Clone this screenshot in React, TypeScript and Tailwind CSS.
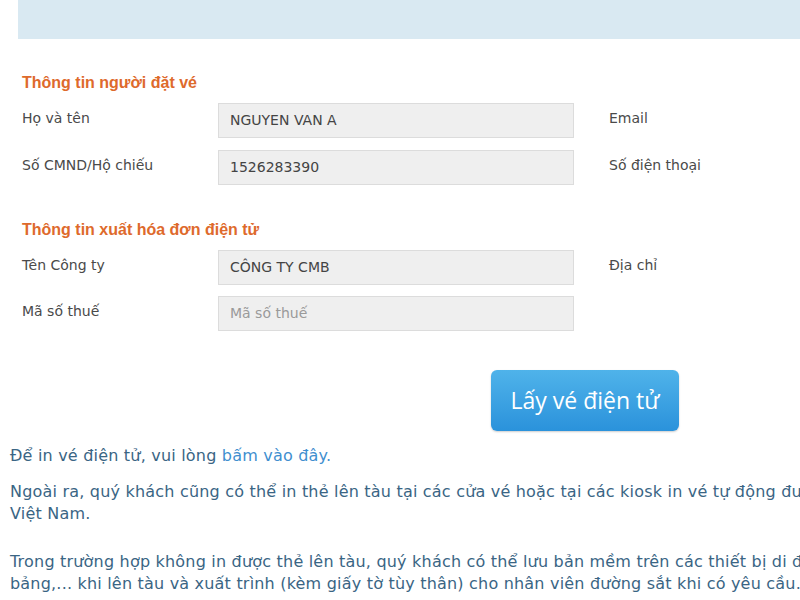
import React from "react";

const labelCls = "text-[14px] text-[#4a4a4a] leading-none";
const font = { fontFamily: '"DejaVu Sans", Verdana, sans-serif' };
const headFont = { fontFamily: '"Liberation Sans", Arial, sans-serif' };

function Field({ value, placeholder }: { value?: string; placeholder?: string }) {
  return (
    <div className="w-[356px] h-[35px] bg-[#efefef] border border-[#dcdcdc] flex items-center pl-[11px] text-[14px]">
      {value ? (
        <span className="text-[#444]">{value}</span>
      ) : (
        <span className="text-[#9a9a9a]">{placeholder}</span>
      )}
    </div>
  );
}

function Row({ label, value, placeholder, right }: { label: string; value?: string; placeholder?: string; right?: string }) {
  return (
    <div className="flex items-center h-[35px]">
      <div className={`w-[196px] ${labelCls} -mt-[6px]`}>{label}</div>
      <Field value={value} placeholder={placeholder} />
      <div className={`ml-[35px] ${labelCls} -mt-[6px]`}>{right}</div>
    </div>
  );
}

export default function App() {
  return (
    <div className="w-[800px] h-[600px] overflow-hidden bg-white" style={font}>
      <div className="ml-[18px] h-[39px] bg-[#d9e9f2]" />
      <div className="pl-[22px] pt-[36px]">
        <div className="text-[16px] font-bold text-[#de6a2c] leading-none" style={headFont}>
          Thông tin người đặt vé
        </div>
        <div className="mt-[12px] flex flex-col gap-[12px]">
          <Row label="Họ và tên" value="NGUYEN VAN A" right="Email" />
          <Row label="Số CMND/Hộ chiếu" value="1526283390" right="Số điện thoại" />
        </div>
        <div className="mt-[37px] text-[16px] font-bold text-[#de6a2c] leading-none" style={headFont}>
          Thông tin xuất hóa đơn điện tử
        </div>
        <div className="mt-[12px] flex flex-col gap-[11px]">
          <Row label="Tên Công ty" value="CÔNG TY CMB" right="Địa chỉ" />
          <Row label="Mã số thuế" placeholder="Mã số thuế" />
        </div>
        <div className="mt-[39px] ml-[469px] w-[188px] h-[61px] rounded-[6px] bg-gradient-to-b from-[#4fb3ea] to-[#2a92db] shadow-[0_1px_2px_rgba(0,0,0,0.2)] flex items-center justify-center">
          <span className="text-white text-[23px]" style={{ fontFamily: '"Open Sans", sans-serif' }}>Lấy vé điện tử</span>
        </div>
      </div>
      <div className="pl-[10px] mt-[14px] text-[16px] tracking-[0.2px] text-[#3a6584] whitespace-nowrap leading-[22px]">
        <div>
          Để in vé điện tử, vui lòng <span className="text-[#3f8fcf]">bấm vào đây.</span>
        </div>
        <div className="mt-[14px]">
          Ngoài ra, quý khách cũng có thể in thẻ lên tàu tại các cửa vé hoặc tại các kiosk in vé tự động được
        </div>
        <div>Việt Nam.</div>
        <div className="mt-[26px]">
          Trong trường hợp không in được thẻ lên tàu, quý khách có thể lưu bản mềm trên các thiết bị di động
        </div>
        <div>bảng,... khi lên tàu và xuất trình (kèm giấy tờ tùy thân) cho nhân viên đường sắt khi có yêu cầu.</div>
      </div>
    </div>
  );
}
